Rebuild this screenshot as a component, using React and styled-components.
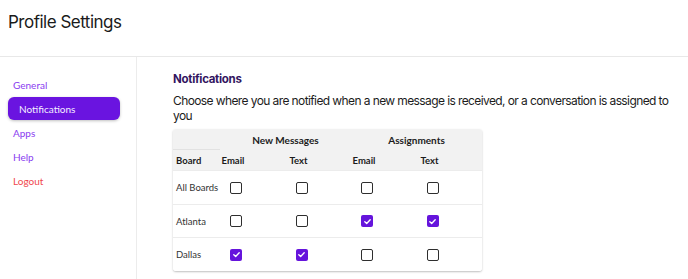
import styled, { createGlobalStyle } from 'styled-components';

const GlobalStyle = createGlobalStyle`
  body {
    margin: 0;
    background: #fff;
    font-family: Inter, "Liberation Sans", sans-serif;
    color: #1c1c1c;
  }
`;

const Page = styled.div`
  width: 688px;
  height: 279px;
  display: flex;
  flex-direction: column;
  overflow: hidden;
`;

const Header = styled.header`
  height: 57px;
  border-bottom: 1px solid #e8e8e8;
  padding: 12px 8px 0;
  box-sizing: border-box;
  h1 {
    margin: 0;
    font-size: 17px;
    font-weight: 400;
    color: #1a1a1a;
    letter-spacing: -0.5px;
  }
`;

const Body = styled.div`
  flex: 1;
  display: flex;
`;

const Sidebar = styled.nav`
  width: 137px;
  flex-shrink: 0;
  box-sizing: border-box;
  border-right: 1px solid #ececec;
  padding: 16px 16px 0 8px;
  display: flex;
  flex-direction: column;
  gap: 1px;
  font-family: Lato, "Noto Sans", sans-serif;
`;

const NavItem = styled.div`
  height: 23px;
  display: flex;
  align-items: center;
  padding-left: ${(p) => (p.$active ? '11px' : '5px')};
  font-size: 10px;
  border-radius: 6px;
  color: ${(p) => (p.$danger ? '#f0474d' : p.$active ? '#f4eeff' : '#8a3cf0')};
  background: ${(p) => (p.$active ? '#6a14e0' : 'transparent')};
  box-shadow: ${(p) => (p.$active ? '0 1px 3px rgba(0,0,0,0.25)' : 'none')};
`;

const Main = styled.main`
  flex: 1;
  padding: 15px 0 0 36px;
  h2 {
    margin: 0 0 7px;
    font-size: 11.5px;
    font-weight: 700;
    letter-spacing: -0.3px;
    color: #33155f;
  }
  p {
    margin: 0 0 6px;
    font-size: 12px;
    line-height: 15px;
    letter-spacing: -0.6px;
    color: #1c1c1c;
    width: 505px;
  }
`;

const Table = styled.div`
  width: 309px;
  border-radius: 3px;
  box-shadow: 0 1px 2px rgba(0,0,0,0.25);
  overflow: hidden;
  font-family: Lato, "Noto Sans", sans-serif;
  font-size: 9.5px;
  color: #1c1c1c;
`;

const Row = styled.div`
  display: grid;
  grid-template-columns: 47px repeat(4, 1fr);
  height: ${(p) => p.$h}px;
  align-items: center;
  background: ${(p) => (p.$head ? '#f2f2f2' : '#fff')};
  border-bottom: ${(p) => (p.$last ? 'none' : '1px solid #ececec')};
  box-sizing: border-box;
`;

const GroupRow = styled.div`
  display: grid;
  grid-template-columns: 47px 1fr 1fr;
  height: 21px;
  background: #f2f2f2;
  align-items: stretch;
`;

const Corner = styled.div`
  border-bottom: 1px solid #e2e2e2;
`;

const GroupLabel = styled.div`
  display: flex;
  align-items: center;
  justify-content: center;
  font-weight: 700;
  font-size: 10px;
`;

const HeadCell = styled.div`
  width: ${(p) => (p.$left ? 'auto' : '26px')};
  text-align: ${(p) => (p.$left ? 'left' : 'center')};
  padding-left: ${(p) => (p.$left ? '3px' : '0')};
  font-weight: 700;
  white-space: nowrap;
`;

const BoardName = styled.div`
  padding-left: 3px;
  font-size: 9.5px;
  color: #333;
  white-space: nowrap;
`;

const Cell = styled.div`
  display: flex;
  padding-left: 10px;
`;

const Box = styled.span`
  width: 12px;
  height: 12px;
  box-sizing: border-box;
  border-radius: 2px;
  border: ${(p) => (p.$on ? 'none' : '1.8px solid #2e2e2e')};
  background: ${(p) => (p.$on ? '#6514dc' : '#fff')};
  display: flex;
  align-items: center;
  justify-content: center;
`;

const Check = ({ on }) => (
  <Box $on={on}>
    {on && (
      <svg width="9" height="9" viewBox="0 0 10 10">
        <path d="M2 5.2 L4.1 7.2 L8 3" fill="none" stroke="#fff" strokeWidth="1.5" strokeLinecap="round" strokeLinejoin="round" />
      </svg>
    )}
  </Box>
);

const boards = [
  ['All Boards', [false, false, false, false]],
  ['Atlanta', [false, false, true, true]],
  ['Dallas', [true, true, false, false]],
];

const App = () => (
  <Page>
    <GlobalStyle />
    <Header>
      <h1>Profile Settings</h1>
    </Header>
    <Body>
      <Sidebar>
        <NavItem>General</NavItem>
        <NavItem $active>Notifications</NavItem>
        <NavItem>Apps</NavItem>
        <NavItem>Help</NavItem>
        <NavItem $danger>Logout</NavItem>
      </Sidebar>
      <Main>
        <h2>Notifications</h2>
        <p>Choose where you are notified when a new message is received, or a conversation is assigned to you</p>
        <Table>
          <GroupRow>
            <Corner />
            <GroupLabel>New Messages</GroupLabel>
            <GroupLabel>Assignments</GroupLabel>
          </GroupRow>
          <Row $head $h={21}>
            <HeadCell $left>Board</HeadCell>
            <HeadCell>Email</HeadCell>
            <HeadCell>Text</HeadCell>
            <HeadCell>Email</HeadCell>
            <HeadCell>Text</HeadCell>
          </Row>
          {boards.map(([name, vals], i) => (
            <Row key={name} $h={i === 0 ? 34 : 33} $last={i === boards.length - 1}>
              <BoardName>{name}</BoardName>
              {vals.map((v, j) => (
                <Cell key={j}>
                  <Check on={v} />
                </Cell>
              ))}
            </Row>
          ))}
        </Table>
      </Main>
    </Body>
  </Page>
);

export default App;
